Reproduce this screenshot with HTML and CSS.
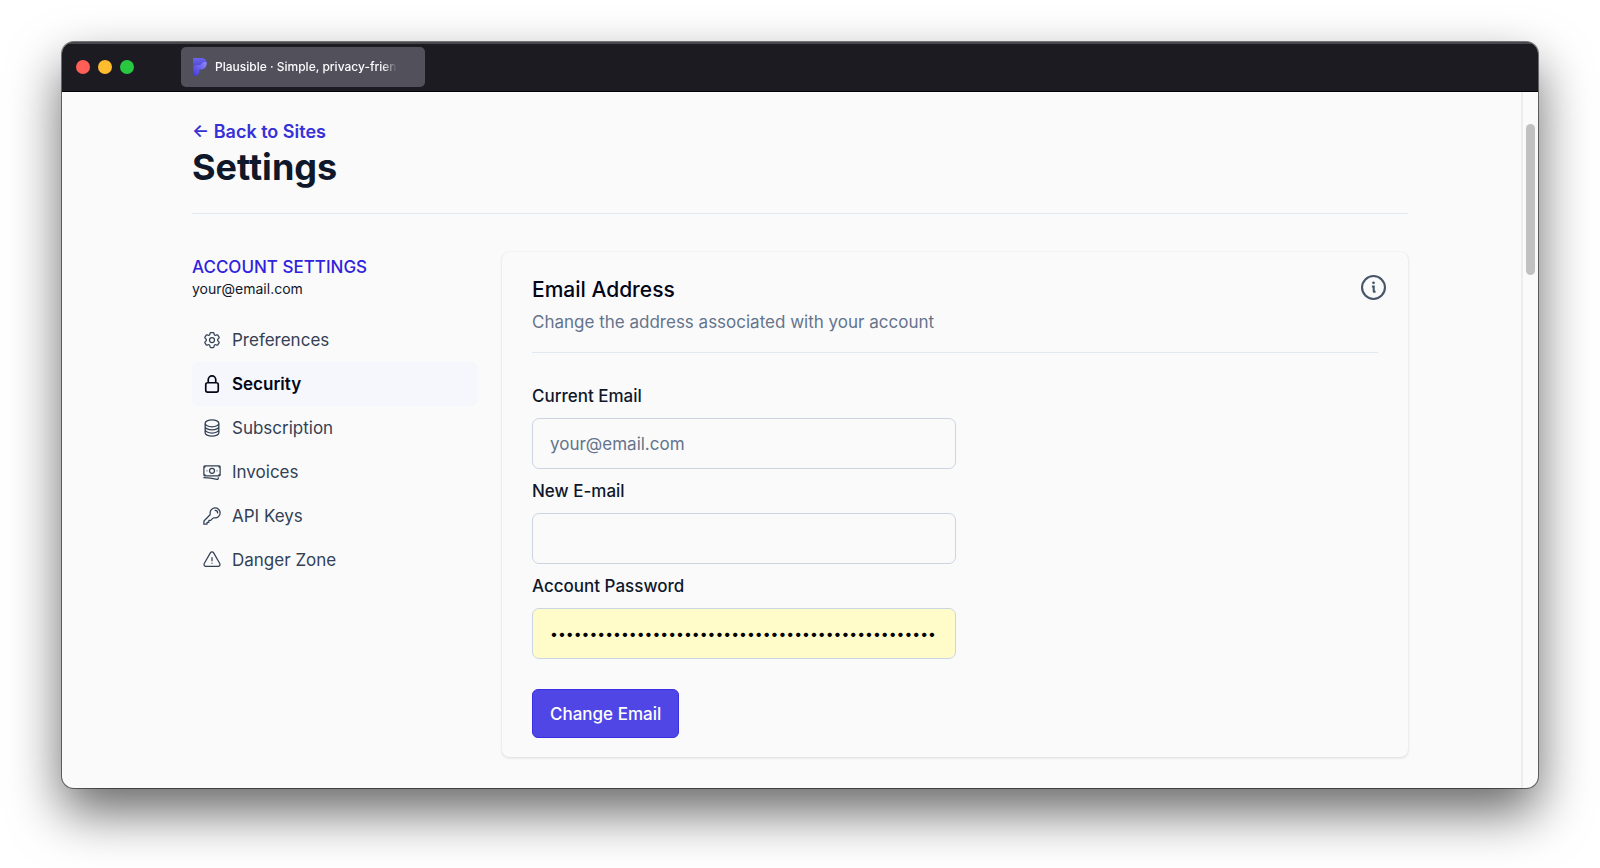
FILE: index.html
```html
<!DOCTYPE html>
<html lang="en">
<head>
  <meta charset="UTF-8" />
  <meta name="viewport" content="width=device-width, initial-scale=1.0" />
  <title>Plausible · Simple, privacy-friendly analytics</title>
  <link rel="stylesheet" href="styles.css">
</head>
<body>

  <div class="window">

    <!-- Title bar -->
    <div class="titlebar">
      <div class="lights">
        <span class="light red"></span>
        <span class="light yellow"></span>
        <span class="light green"></span>
      </div>
      <div class="tab">
        <svg class="logo" viewBox="0 0 14 18" aria-hidden="true">
          <defs>
            <linearGradient id="g1" x1="0" y1="0" x2="0" y2="1">
              <stop offset="0" stop-color="#6a64f0" />
              <stop offset="1" stop-color="#4a42c4" />
            </linearGradient>
            <linearGradient id="g2" x1="1" y1="0" x2="0" y2="1">
              <stop offset="0" stop-color="#8f8af8" />
              <stop offset="1" stop-color="#4238e0" />
            </linearGradient>
          </defs>
          <path fill="url(#g1)" d="M0 0h8.500c3.200 0 5.300 2.300 5.300 5.500L10 8 0 11z" />
          <path fill="url(#g2)" d="M13.700 4.500c.3 4-2.200 7.100-6 7.100H6.300v1.600c0 2.600-1.600 4.500-3.900 4.500H0V9.500c1.500-2 3-2.700 5-2.300 2 .4 3-.7 4.100-1.900 1.100-1.300 2.800-1.500 4.600-.8z" />
        </svg>
        <span class="tab-title">Plausible · Simple, privacy-frien</span>
      </div>
    </div>

    <div class="viewport">
      <main class="page">
        <header class="page-header">
          <a class="back" href="#">← Back to Sites</a>
          <h1>Settings</h1>
        </header>

        <div class="columns">
          <!-- Sidebar -->
          <aside class="sidebar">
            <h2 class="account">ACCOUNT SETTINGS</h2>
            <p class="account-email">your@email.com</p>
            <nav class="menu">
              <a href="#">
                <svg class="icon" viewBox="0 0 24 24"><path d="M9.594 3.940c.09-.542.560-.940 1.110-.940h2.593c.550 0 1.020.398 1.110.940l.213 1.281c.063.374.313.686.645.870.074.040.147.083.220.127.325.196.720.257 1.075.124l1.217-.456a1.125 1.125 0 0 1 1.370.490l1.296 2.247a1.125 1.125 0 0 1-.260 1.431l-1.003.827c-.293.241-.438.613-.430.992a7.723 7.723 0 0 1 0 .255c-.008.378.137.750.430.991l1.004.827c.424.350.534.955.260 1.430l-1.298 2.247a1.125 1.125 0 0 1-1.369.491l-1.217-.456c-.355-.133-.750-.072-1.076.124a6.470 6.470 0 0 1-.220.128c-.331.183-.581.495-.644.869l-.213 1.281c-.090.543-.560.940-1.110.940h-2.594c-.550 0-1.019-.398-1.110-.940l-.213-1.281c-.062-.374-.312-.686-.644-.870a6.520 6.520 0 0 1-.220-.127c-.325-.196-.720-.257-1.076-.124l-1.217.456a1.125 1.125 0 0 1-1.369-.490l-1.297-2.247a1.125 1.125 0 0 1 .260-1.431l1.004-.827c.292-.240.437-.613.430-.991a6.932 6.932 0 0 1 0-.255c.007-.380-.138-.751-.430-.992l-1.004-.827a1.125 1.125 0 0 1-.260-1.430l1.297-2.247a1.125 1.125 0 0 1 1.370-.491l1.216.456c.356.133.751.072 1.076-.124.072-.044.146-.086.220-.128.332-.183.582-.495.644-.869l.214-1.280Z" /><path d="M15 12a3 3 0 1 1-6 0 3 3 0 0 1 6 0Z" /></svg>
                Preferences
              </a>
              <a href="#" class="active">
                <svg class="icon" viewBox="0 0 24 24"><path d="M16.500 10.500V6.750a4.500 4.500 0 1 0-9 0v3.750m-.750 11.250h10.500a2.250 2.250 0 0 0 2.250-2.250v-6.750a2.250 2.250 0 0 0-2.250-2.250H6.750a2.250 2.250 0 0 0-2.250 2.250v6.750a2.250 2.250 0 0 0 2.250 2.250Z" /></svg>
                Security
              </a>
              <a href="#">
                <svg class="icon" viewBox="0 0 24 24"><path d="M20.250 6.375c0 2.278-3.694 4.125-8.250 4.125S3.750 8.653 3.750 6.375m16.500 0c0-2.278-3.694-4.125-8.250-4.125S3.750 4.097 3.750 6.375m16.500 0v11.250c0 2.278-3.694 4.125-8.250 4.125s-8.250-1.847-8.250-4.125V6.375m16.500 0v3.750m-16.500-3.750v3.750m16.500 0v3.750C20.250 16.153 16.556 18 12 18s-8.250-1.847-8.250-4.125v-3.750m16.500 0c0 2.278-3.694 4.125-8.250 4.125s-8.250-1.847-8.250-4.125" /></svg>
                Subscription
              </a>
              <a href="#">
                <svg class="icon" viewBox="0 0 24 24"><path d="M2.250 18.750a60.070 60.070 0 0 1 15.797 2.101c.727.198 1.453-.342 1.453-1.096V18.750M3.750 4.500v.750A.750.750 0 0 1 3 6h-.750m0 0v-.375c0-.621.504-1.125 1.125-1.125H20.250M2.250 6v9m18-10.500v.750c0 .414.336.750.750.750h.750m-1.500-1.500h.375c.621 0 1.125.504 1.125 1.125v9.750c0 .621-.504 1.125-1.125 1.125h-.375m1.500-1.500H21a.750.750 0 0 0-.750.750v.750m0 0H3.750m0 0h-.375a1.125 1.125 0 0 1-1.125-1.125V15m1.500 1.500v-.750A.750.750 0 0 0 3 15h-.750M15 10.500a3 3 0 1 1-6 0 3 3 0 0 1 6 0Zm3 0h.008v.008H18V10.500Zm-12 0h.008v.008H6V10.500Z" /></svg>
                Invoices
              </a>
              <a href="#">
                <svg class="icon" viewBox="0 0 24 24"><path d="M15.750 5.250a3 3 0 0 1 3 3m3 0a6 6 0 0 1-7.029 5.912c-.563-.097-1.159.026-1.563.430L10.500 17.250H8.250v2.250H6v2.250H2.250v-2.818c0-.597.237-1.170.659-1.591l6.499-6.499c.404-.404.527-1 .430-1.563A6 6 0 1 1 21.750 8.250Z" /></svg>
                API Keys
              </a>
              <a href="#">
                <svg class="icon" viewBox="0 0 24 24"><path d="M12 9v3.750m-9.303 3.376c-.866 1.500.217 3.374 1.948 3.374h14.710c1.730 0 2.813-1.874 1.948-3.374L13.949 3.378c-.866-1.500-3.032-1.500-3.898 0L2.697 16.126ZM12 15.750h.007v.008H12v-.008Z" /></svg>
                Danger Zone
              </a>
            </nav>
          </aside>

          <!-- Email form -->
          <section class="card">
            <div class="card-header">
              <div>
                <h2>Email Address</h2>
                <p>Change the address associated with your account</p>
              </div>
              <a class="info" href="#" aria-label="Help">
                <svg viewBox="0 0 24 24"><circle cx="12" cy="12" r="11" /><path d="M10.500 11h1.700v5M11.600 16h2.400" /><circle class="dot" cx="12" cy="7.500" r="1.300" /></svg>
              </a>
            </div>
            <form>
              <label for="current">Current Email</label>
              <input type="email" id="current" value="your@email.com" readonly />
              <label for="new">New E-mail</label>
              <input type="email" id="new" />
              <label for="password">Account Password</label>
              <input type="password" id="password" class="filled" value="0123456789012345678901234567890123456789012345678" />
              <button type="button">Change Email</button>
            </form>
          </section>
        </div>
      </main>
      <div class="scrollbar"><div class="thumb"></div></div>
    </div>
  </div>

</body>
</html>
```
FILE: styles.css
```css
* {
  box-sizing: border-box;
}
body {
  font-family: Inter, "Liberation Sans", sans-serif;
  font-size: 17px;
  line-height: 24px;
  margin: 0;
  padding: 42px 62px 80px;
  background: #fff;
  color: #0f172a;
}
h1, h2, p {
  margin: 0;
}
a {
  text-decoration: none;
}
.window {
  background: #fafafb;
  border-radius: 12px;
  overflow: hidden;
  box-shadow: 0 0 0 1px rgba(0, 0, 0, 0.5), 0 24px 52px rgba(0, 0, 0, 0.6);
}

/* title bar */
.titlebar {
  display: flex;
  align-items: center;
  height: 50px;
  padding: 0 14px;
  background: #1c1b22;
  box-shadow: inset 0 2px #48474d;
  border-bottom: 1px solid #000;
}
.lights {
  display: flex;
  gap: 8px;
  width: 105px;
}
.light {
  width: 14px;
  height: 14px;
  border-radius: 50%;
}
.red {
  background: #ff5f57;
}
.yellow {
  background: #febc2e;
}
.green {
  background: #28c840;
}
.tab {
  display: flex;
  align-items: center;
  gap: 8px;
  width: 244px;
  height: 40px;
  padding: 0 12px;
  border-radius: 5px;
  background: #52505b;
}
.logo {
  flex: none;
  width: 14px;
  height: 18px;
}
.tab-title {
  white-space: nowrap;
  font-size: 12px;
  font-weight: 500;
  color: #fbfbfe;
  -webkit-mask-image: linear-gradient(to right, #000 92%, transparent);
  mask-image: linear-gradient(to right, #000 92%, transparent);
}

/* page */
.viewport {
  display: flex;
}
.page {
  flex: 1;
  padding: 28px 113px 31px 130px;
}
.page-header {
  padding-bottom: 23px;
  border-bottom: 1px solid #e2e8f0;
}
.back {
  display: block;
  font-size: 18px;
  font-weight: 600;
  color: #3730d8;
}
h1 {
  font-size: 36px;
  font-weight: 700;
  line-height: 46px;
}
.columns {
  display: grid;
  grid-template-columns: 286px 1fr;
  gap: 24px;
  align-items: start;
  padding-top: 38px;
}
.sidebar {
  padding-top: 3px;
}
.account {
  font-size: 17px;
  font-weight: 500;
  color: #2f22dd;
}
.account-email {
  font-size: 14px;
  line-height: 20px;
  margin-bottom: 19px;
}
.menu a {
  display: flex;
  align-items: center;
  gap: 10px;
  height: 44px;
  padding: 0 10px;
  border-radius: 6px;
  color: #334155;
}
.menu a.active {
  background: #f5f7fc;
  color: #020617;
  font-weight: 600;
}
.icon {
  width: 20px;
  height: 20px;
  fill: none;
  stroke: currentColor;
  stroke-width: 1.5;
  stroke-linecap: round;
  stroke-linejoin: round;
}
.active .icon {
  stroke-width: 2;
}

/* card */
.card {
  padding: 23px 30px 19px;
  border-radius: 7px;
  box-shadow: 0 0 1px rgba(15, 23, 42, 0.1), 0 1px 3px rgba(0, 0, 0, 0.12);
}
.card-header {
  display: flex;
  justify-content: space-between;
  padding-bottom: 16px;
  border-bottom: 1px solid #e2e8f0;
}
.card-header h2 {
  font-size: 21px;
  font-weight: 500;
  line-height: 30px;
  color: #020617;
}
.card-header p {
  margin-top: 3px;
  line-height: 28px;
  color: #64748b;
}
.info {
  margin-right: -8px;
}
.info svg {
  display: block;
  width: 25px;
  height: 25px;
  fill: none;
  stroke: #475569;
  stroke-width: 2;
}
.info .dot {
  fill: #475569;
  stroke: none;
}
form {
  display: flex;
  flex-direction: column;
  align-items: flex-start;
  padding-top: 21px;
}
label {
  padding: 8px 0;
  line-height: 28px;
  font-weight: 500;
}
input {
  width: 424px;
  max-width: 100%;
  height: 51px;
  padding: 0 17px;
  border: 1px solid #cbd5e1;
  border-radius: 7px;
  background: transparent;
  font: inherit;
  color: #64748b;
}
input.filled {
  background: #fffcc9;
  font-size: 14px;
  color: #000;
}
button {
  height: 49px;
  margin-top: 30px;
  padding: 0 17px;
  border: 1px solid #3a2fe0;
  border-radius: 6px;
  background: #4f46e5;
  font: inherit;
  font-weight: 500;
  color: #fff;
}

/* scrollbar */
.scrollbar {
  width: 17px;
  padding: 32px 3px;
  border-left: 2px solid #ececef;
}
.thumb {
  width: 9px;
  height: 151px;
  border-radius: 5px;
  background: #c1c1c1;
}
```
